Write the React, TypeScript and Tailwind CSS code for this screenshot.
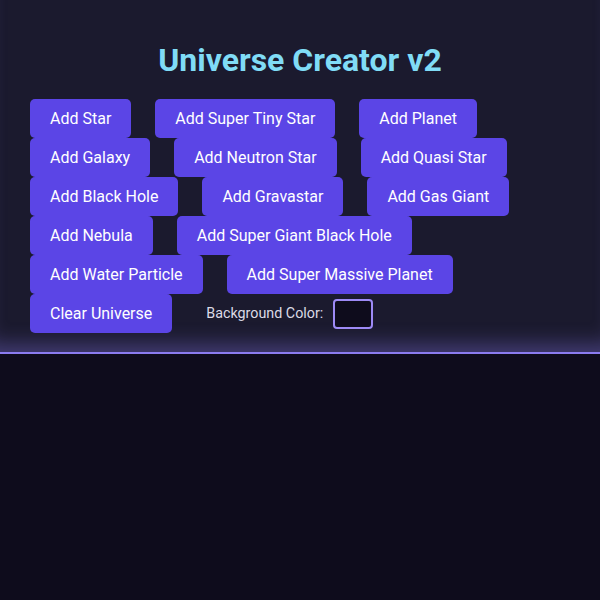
import { useState } from 'react';

const BUTTONS = [
  'Add Star',
  'Add Super Tiny Star',
  'Add Planet',
  'Add Galaxy',
  'Add Neutron Star',
  'Add Quasi Star',
  'Add Black Hole',
  'Add Gravastar',
  'Add Gas Giant',
  'Add Nebula',
  'Add Super Giant Black Hole',
  'Add Water Particle',
  'Add Super Massive Planet',
  'Clear Universe',
];

export default function App() {
  const [bg] = useState('#0e0c1c');

  return (
    <div className="min-h-[600px] bg-[#0e0c1c] font-['Roboto',sans-serif]">
      <div className="bg-[#1b1a2e] pt-[42px] pb-[19px] px-[18px] border-b-2 border-[#8b7cf0] shadow-[inset_0_-22px_20px_-14px_rgba(139,124,246,0.35)]">
        <h1 className="text-center text-[32px] leading-9 font-bold text-[#80dcf6] mb-[21px]">
          Universe Creator v2
        </h1>
        <div className="flex flex-wrap items-center">
          {BUTTONS.map((label) => (
            <button
              key={label}
              className="mx-3 px-5 py-[10px] text-base leading-[19px] text-white bg-[#5b45e6] rounded-[5px]"
            >
              {label}
            </button>
          ))}
          <div className="flex items-center ml-[22px]">
            <span className="text-[14.3px] text-[#dcdbe6] mr-[10px]">Background Color:</span>
            <div
              className="w-10 h-[30px] rounded-[4px] border-2 border-[#9d8af5]"
              style={{ backgroundColor: bg }}
            />
          </div>
        </div>
      </div>
    </div>
  );
}
